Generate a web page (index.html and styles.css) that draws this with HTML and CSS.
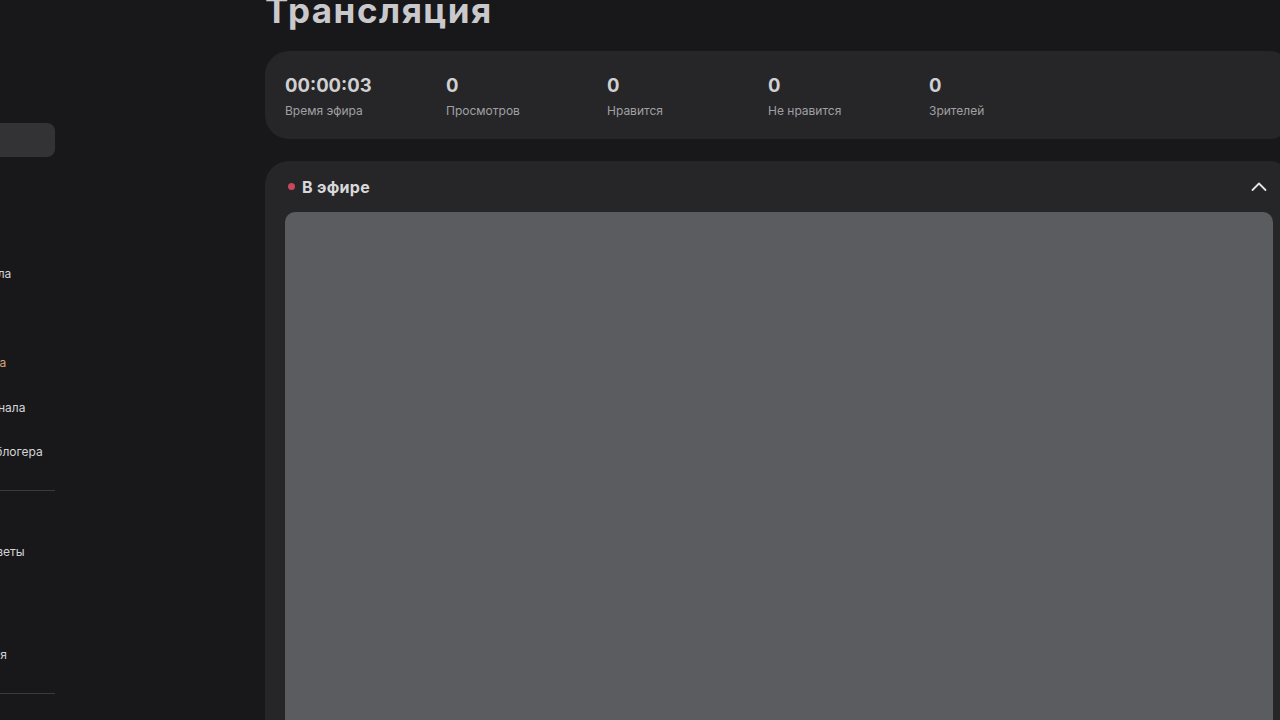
FILE: index.html
```html
<!DOCTYPE html>
<html lang="ru">
<head>
<meta charset="utf-8">
<title>Трансляция</title>
<link rel="stylesheet" href="styles.css">
</head>
<body>
<div class="app">
  <aside class="sidebar">
    <nav class="nav">
      <a class="nav-item active"><span class="ico"></span><span class="label">Трансляции</span></a>
      <a class="nav-item"><span class="ico"></span><span class="label">Главная</span></a>
      <a class="nav-item"><span class="ico"></span><span class="label">Видео</span></a>
      <a class="nav-item"><span class="ico"></span><span class="label">Аналитика канала</span></a>
      <a class="nav-item"><span class="ico"></span><span class="label">Отзывы</span></a>
      <a class="nav-item accent"><span class="ico"></span><span class="label">Прямая продажа</span></a>
      <a class="nav-item"><span class="ico"></span><span class="label">Оформление канала</span></a>
      <a class="nav-item"><span class="ico"></span><span class="label">Рекомендации блогера</span></a>
    </nav>
    <div class="divider"></div>
    <nav class="nav nav-help">
      <a class="nav-item"><span class="ico"></span><span class="label">Подсказки и советы</span></a>
      <a class="nav-item"><span class="ico"></span><span class="label">Блог</span></a>
      <a class="nav-item spaced"><span class="ico"></span><span class="label">Моя информация</span></a>
    </nav>
    <div class="divider"></div>
  </aside>

  <main class="main">
    <h1 class="title">Трансляция</h1>

    <section class="card stats">
      <div class="stat"><div class="value">00:00:03</div><div class="caption">Время эфира</div></div>
      <div class="stat"><div class="value">0</div><div class="caption">Просмотров</div></div>
      <div class="stat"><div class="value">0</div><div class="caption">Нравится</div></div>
      <div class="stat"><div class="value">0</div><div class="caption">Не нравится</div></div>
      <div class="stat"><div class="value">0</div><div class="caption">Зрителей</div></div>
    </section>

    <section class="card live">
      <header class="live-head">
        <div class="live-title"><span class="dot"></span>В эфире</div>
        <svg class="chevron" width="16" height="12" viewBox="0 0 16 12" fill="none">
          <path d="M1.5 9 L8 2.5 L14.5 9" stroke="#e4e4e4" stroke-width="1.8" stroke-linecap="round" stroke-linejoin="round"/>
        </svg>
      </header>
      <div class="player"></div>
    </section>
  </main>
</div>
</body>
</html>
```

FILE: styles.css
```css
* { box-sizing: border-box; }

html, body {
  margin: 0;
  height: 100%;
  background: #18181b;
  overflow: hidden;
}

body {
  font-family: Inter, "Noto Sans", sans-serif;
  color: #d2d2d4;
}

.app {
  display: flex;
  width: 1280px;
  height: 720px;
  overflow: hidden;
}

/* Sidebar (scrolled partly out of view on the left) */
.sidebar {
  flex: 0 0 200px;
  margin-left: -145px;
  padding: 123px 0 0 0;
  display: flex;
  flex-direction: column;
}

.nav {
  display: flex;
  flex-direction: column;
  gap: 10.5px;
}

.nav-item {
  flex: none;
  display: flex;
  align-items: center;
  gap: 12px;
  height: 34px;
  padding: 0 12px 0 20px;
  border-radius: 8px;
  font-size: 12px;
  color: #d4d4d6;
  text-decoration: none;
  white-space: nowrap;
}

.nav-item .ico {
  flex: 0 0 18px;
  height: 18px;
  border-radius: 4px;
  border: 1.5px solid #8a8a8e;
}

.nav-item.active {
  background: #333336;
}

.nav-item.accent .label {
  color: #d9a27a;
}

.nav-item.spaced {
  margin-top: 14px;
}

.divider {
  flex: none;
  height: 1px;
  background: #3a3a3d;
  margin-top: 21px;
}

.nav-help {
  margin-top: 44px;
}

/* Main */
.main {
  flex: 0 0 1028px;
  margin-left: 210px;
  display: flex;
  flex-direction: column;
}

.title {
  flex: none;
  margin: -10px 0 0;
  font-size: 35px;
  line-height: 40px;
  font-weight: 700;
  letter-spacing: 1.5px;
  color: #c9c9cb;
}

.card {
  background: #262628;
  border-radius: 24px;
}

.stats {
  flex: none;
  margin-top: 21px;
  height: 88px;
  display: flex;
  padding: 22px 20px 0;
}

.stat {
  flex: 0 0 161px;
}

.value {
  font-size: 18.5px;
  line-height: 24px;
  font-weight: 700;
  color: #d0d0d2;
}

.caption {
  margin-top: 6px;
  font-size: 12px;
  line-height: 16px;
  color: #a0a0a4;
}

.live {
  flex: none;
  margin-top: 22px;
  padding: 0 20px;
  display: flex;
  flex-direction: column;
}

.live-head {
  height: 51px;
  display: flex;
  align-items: center;
  justify-content: space-between;
}

.live-title {
  display: flex;
  align-items: center;
  gap: 7px;
  font-size: 16px;
  font-weight: 700;
  letter-spacing: 0.3px;
  color: #d8d8da;
}

.dot {
  width: 7px;
  height: 7px;
  border-radius: 50%;
  background: #c9465c;
  margin-left: 3px;
}

.chevron {
  margin-right: 6px;
}

.player {
  height: 560px;
  background: #5b5c60;
  border-radius: 10px;
}
```
